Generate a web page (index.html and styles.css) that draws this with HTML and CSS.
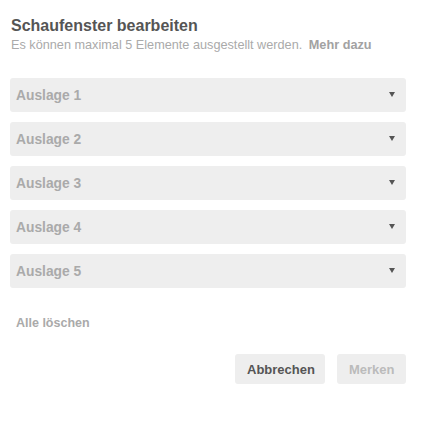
FILE: index.html
```html
<!DOCTYPE html>
<html lang="de">
<head>
<meta charset="utf-8">
<link rel="stylesheet" href="styles.css">
</head>
<body>
<div class="dialog">
  <h1 class="title">Schaufenster bearbeiten</h1>
  <p class="subtitle">Es können maximal 5 Elemente ausgestellt werden. <a class="more">Mehr dazu</a></p>
  <div class="list">
    <div class="select"><span>Auslage 1</span><i class="arrow"></i></div>
    <div class="select"><span>Auslage 2</span><i class="arrow"></i></div>
    <div class="select"><span>Auslage 3</span><i class="arrow"></i></div>
    <div class="select"><span>Auslage 4</span><i class="arrow"></i></div>
    <div class="select"><span>Auslage 5</span><i class="arrow"></i></div>
  </div>
  <div class="clear">Alle löschen</div>
  <div class="actions">
    <button class="btn btn-cancel">Abbrechen</button>
    <button class="btn btn-save">Merken</button>
  </div>
</div>
</body>
</html>
```
FILE: styles.css
```css
html, body { margin: 0; padding: 0; background: #fff; }
body { font-family: "Liberation Sans", Arial, sans-serif; }
.dialog { padding: 16px 17px 0 10px; }
.title { margin: 0 0 0 1px; font-size: 16px; font-weight: bold; color: #555; line-height: 20px; }
.subtitle { margin: 1px 0 0 1px; font-size: 12.7px; color: #aaa; line-height: 17px; }
.more { font-weight: bold; color: #a2a2a2; margin-left: 3px; }
.list { margin-top: 24px; display: flex; flex-direction: column; gap: 10px; }
.select { height: 34px; background: #eee; border-radius: 3px; display: flex; align-items: center; justify-content: space-between; padding: 0 11px 0 6px; box-sizing: border-box; }
.select span { font-size: 13.8px; font-weight: bold; color: #aaa; }
.arrow { width: 0; height: 0; border-left: 3px solid transparent; border-right: 3px solid transparent; border-top: 5px solid #555; margin-top: -2px; }
.clear { margin: 28px 0 0 6px; font-size: 12.5px; font-weight: bold; color: #aaa; line-height: 14px; }
.actions { margin-top: 24px; display: flex; justify-content: flex-end; gap: 12px; }
.btn { height: 30px; border: 0; border-radius: 3px; background: #eee; font-family: inherit; font-size: 13px; font-weight: bold; padding: 0 12px; }
.btn-cancel { color: #555; width: 90px; }
.btn-save { color: #bbb; width: 69px; }
```
